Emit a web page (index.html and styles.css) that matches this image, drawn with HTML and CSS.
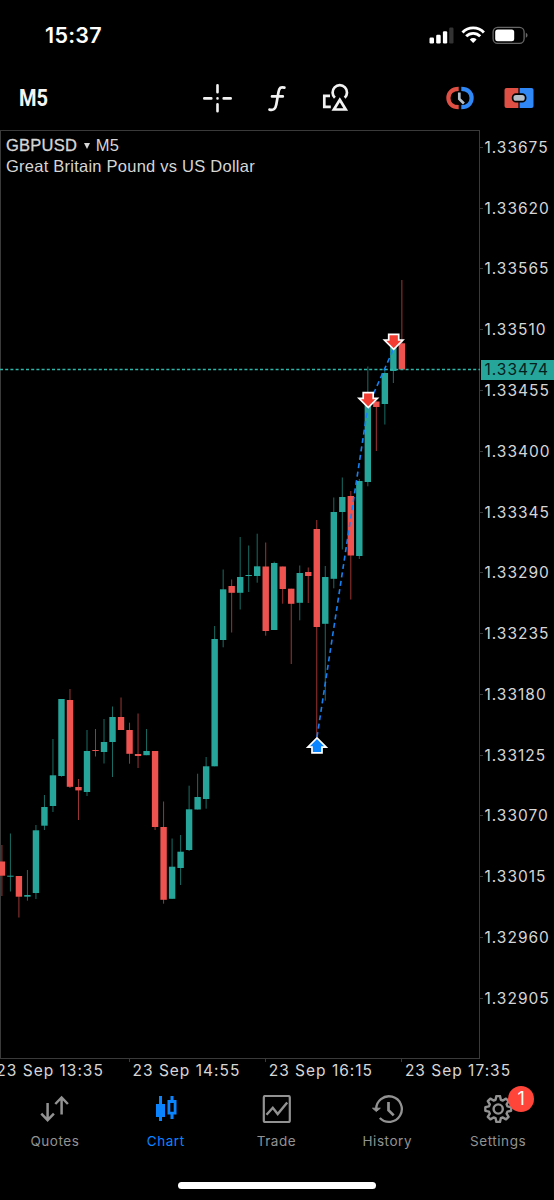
FILE: index.html
```
<!DOCTYPE html>
<html lang="en">
  <head>
    <meta charset="utf-8">
    <title>GBPUSD M5</title>
    <meta name="viewport" content="width=device-width, initial-scale=1">
    <link rel="stylesheet" href="styles.css">
  </head>
  <body>
    <header class="status-bar">
      <span class="clock">15:37</span>
      <svg class="status-icons" width="100" height="20" viewBox="0 0 100 20">
        <g fill="#fff">
          <rect x="0.5" y="11.5" width="4.5" height="6" rx="1.2"/>
          <rect x="7.2" y="8.7" width="4.5" height="8.8" rx="1.2"/>
          <rect x="13.9" y="5.2" width="4.3" height="12.3" rx="1.2"/>
          <rect x="20.2" y="1.6" width="4.3" height="15.9" rx="1.2" fill="#333"/>
        </g>
        <g fill="none" stroke="#fff" stroke-width="2.9">
          <path d="M33.5 6.4a15 15 0 0 1 21.4 0"/>
          <path d="M37.2 10.3a9.8 9.8 0 0 1 14 0"/>
        </g>
        <path d="M40.8 13.4a4.8 4.8 0 0 1 6.8 0l-3.4 3.7z" fill="#fff"/>
        <rect x="64.1" y="1.3" width="31" height="16" rx="4.6" fill="none" stroke="#666" stroke-width="1.3"/>
        <rect x="66.2" y="3.4" width="19" height="11.8" rx="2.5" fill="#fff"/>
        <path d="M96.8 6.8c2.3.9 2.3 4.2 0 5z" fill="#666"/>
      </svg>
    </header>

    <nav class="toolbar">
      <svg class="timeframe" width="40" height="30" viewBox="0 0 40 30">
        <text x="0" y="23" textLength="29" lengthAdjust="spacingAndGlyphs">M5</text>
      </svg>
      <div class="tools">
        <svg width="30" height="30" viewBox="0 0 30 30" fill="none" stroke="#f2f2f2" stroke-width="2.6" stroke-linecap="round">
          <path d="M15.5 2.3v7M15.5 21.3v7M2.3 15.4h7M21.7 15.4h7M15.5 15.4h.01"/>
        </svg>
        <svg width="30" height="30" viewBox="0 0 30 30" fill="none" stroke="#f2f2f2" stroke-width="2.7" stroke-linecap="round" stroke-linejoin="round">
          <path d="M23.4 4.6C19.6 3.6 18.2 5 17.5 9l-2.2 12.500c-.8 4.300-2.600 6.200-6.800 5.100M11 13.400h10.800"/>
        </svg>
        <svg width="30" height="30" viewBox="0 0 30 30" fill="none" stroke="#f2f2f2" stroke-width="2.7">
          <path d="M14.900 14.700a7.200 7.200 0 1 1 9.800 0"/>
          <path d="M19.800 16.800l5.900 9.700H13.900z"/>
          <path d="M10 12.900H4.300v10.900h6.500"/>
        </svg>
      </div>
      <div class="trade-tools">
        <svg width="30" height="26" viewBox="0 0 30 26">
          <g fill="none" stroke-width="4.2">
            <path d="M13.700 3.800C6.900 3.800 3.400 8 3.400 13s3.500 9.200 10.300 9.200" stroke="#df4f43"/>
            <path d="M16.300 3.800c6.800 0 10.300 4.200 10.300 9.200s-3.500 9.200-10.300 9.200" stroke="#2f88f5"/>
          </g>
          <path d="M14.300 7.500V14l4.600 4.500" fill="none" stroke="#b4bec8" stroke-width="2.700"/>
        </svg>
        <svg width="30" height="26" viewBox="0 0 30 26">
          <path d="M14.400 3H2.500A2 2 0 0 0 .5 5v16a2 2 0 0 0 2 2h11.900z" fill="#df4f43"/>
          <path d="M15.600 3h11.900a2 2 0 0 1 2 2v16a2 2 0 0 1-2 2H15.600z" fill="#2f88f5"/>
          <rect x="8.600" y="9.100" width="13" height="7.600" rx="3.400" fill="#b4bec8" stroke="#000" stroke-width="1.700"/>
        </svg>
      </div>
    </nav>

    <main class="chart">
      <section class="plot">
        <div class="symbol">
          <p><b>GBPUSD</b> <i></i> <span>M5</span></p>
          <p>Great Britain Pound vs US Dollar</p>
        </div>
        <svg class="candles" id="candles" width="480" height="929" viewBox="0 130 480 929"></svg>
      </section>
      <aside class="price-axis">
        <span>1.33675</span>
        <span>1.33620</span>
        <span>1.33565</span>
        <span>1.33510</span>
        <span>1.33455</span>
        <span>1.33400</span>
        <span>1.33345</span>
        <span>1.33290</span>
        <span>1.33235</span>
        <span>1.33180</span>
        <span>1.33125</span>
        <span>1.33070</span>
        <span>1.33015</span>
        <span>1.32960</span>
        <span>1.32905</span>
        <strong class="last-price">1.33474</strong>
      </aside>
      <footer class="time-axis">
        <span>23 Sep 13:35</span>
        <span>23 Sep 14:55</span>
        <span>23 Sep 16:15</span>
        <span>23 Sep 17:35</span>
      </footer>
    </main>

    <nav class="tabs">
      <a class="tab">
        <svg width="32" height="32" viewBox="0 0 32 32" fill="none" stroke="currentColor" stroke-width="2.5">
          <path d="M8.600 8v16.500M2.300 18.700l6.300 6.500 6.300-6.500M22.600 19.500V3M16.300 9l6.300-6.500L28.900 9"/>
        </svg>
        <span>Quotes</span>
      </a>
      <a class="tab active">
        <svg width="32" height="32" viewBox="0 0 32 32" fill="currentColor">
          <path d="M9 1h3v8h3v13h-3v4H9v-4H6V9h3z"/>
          <path d="M20.500 1h3v4h3v14.500h-3V24h-3v-4.500h-3V5h3zM20.300 8v8.800h3.400V8z" fill-rule="evenodd"/>
        </svg>
        <span>Chart</span>
      </a>
      <a class="tab">
        <svg width="32" height="32" viewBox="0 0 32 32" fill="none" stroke="currentColor" stroke-width="2.200">
          <rect x="2.800" y="1" width="26" height="26" rx="1.500"/>
          <path d="M5.500 19.800l6.300-7 4.900 6.200 9.500-11.500" stroke-width="2.400"/>
        </svg>
        <span>Trade</span>
      </a>
      <a class="tab">
        <svg width="32" height="32" viewBox="0 0 32 32" fill="none" stroke="currentColor" stroke-width="2.300">
          <path d="M4.200 14.500a12.800 12.800 0 1 1 3.600 8.500"/>
          <path d="M.5 13.200h7.800L4.300 16.500z" fill="currentColor" stroke-width="1"/>
          <path d="M16.500 7v8.200l5.200 5.200" stroke-width="2.700"/>
        </svg>
        <span>History</span>
      </a>
      <a class="tab">
        <svg width="32" height="32" viewBox="0 0 32 32" fill="none" stroke="currentColor" stroke-width="2.400" stroke-linejoin="round">
          <path id="gear"/>
          <circle cx="15.200" cy="14" r="4.600"/>
        </svg>
        <span>Settings</span>
        <em class="badge">1</em>
      </a>
    </nav>
    <div class="home-indicator"></div>

    <script>

const UP = "#26a69a";
const DOWN = "#ef5350";
const STEP = 8.51;

// [direction, high, body top, body bottom, low]
const candles = [
  [-1, 845, 861.5, 875.7, 896],
  [1, 833.5, 875.7, 876.7, 891.5],
  [-1, 876, 876, 896.7, 917.5],
  [1, 870, 895, 896.7, 900.7],
  [1, 825, 830.3, 893, 899],
  [1, 795, 807, 825.7, 830],
  [1, 739, 775.3, 806, 812],
  [1, 699, 699, 776, 776.7],
  [-1, 689, 700, 786.8, 788],
  [-1, 779, 787, 790.4, 820],
  [1, 730, 751, 792, 796],
  [-1, 729, 750, 751, 756.5],
  [1, 719, 742, 752, 763.5],
  [1, 706.5, 717, 742, 777],
  [-1, 697.5, 717, 730, 730],
  [-1, 722.7, 730, 753.8, 763.7],
  [-1, 713.5, 754, 756, 768],
  [1, 729, 751, 755.2, 755.2],
  [-1, 751, 751, 827, 830],
  [-1, 801.5, 827, 899.8, 903.7],
  [1, 838.5, 866.7, 898.8, 898.8],
  [1, 835, 851.7, 868, 885],
  [1, 785.7, 809.3, 850, 851],
  [1, 773.7, 797, 809.5, 809.5],
  [1, 757, 766.3, 799, 808.7],
  [1, 626, 639, 766.3, 766.3],
  [1, 569.5, 589.3, 640, 647.3],
  [-1, 579.5, 586, 592.8, 632.5],
  [1, 537, 577, 592.8, 609.5],
  [1, 545.5, 575, 576, 592],
  [1, 533.7, 566.3, 576, 582.7],
  [-1, 542.5, 566.5, 631, 635.7],
  [1, 561.7, 563, 630, 630],
  [-1, 566.5, 566.5, 589, 603.7],
  [-1, 588.7, 588.7, 603.8, 664],
  [1, 565.5, 573, 602.8, 620.3],
  [-1, 567.5, 572, 576, 603],
  [-1, 520, 529, 627, 738],
  [1, 566, 577, 623.8, 700.7],
  [1, 497.5, 512, 578.8, 588.3],
  [1, 477.5, 497, 512, 549.5],
  [-1, 491, 496, 555.5, 599.5],
  [1, 479, 481, 556, 559],
  [1, 366.5, 404, 482, 486.3],
  [-1, 401.5, 401.5, 407, 451],
  [1, 370, 373, 404, 424.5],
  [1, 345, 345, 371, 383],
  [-1, 280, 343.3, 369.5, 369.5],
];

let svg = "";
candles.forEach(([dir, high, top, bottom, low], i) => {
  const x = 1.9 + i * STEP;
  const color = dir > 0 ? UP : DOWN;
  svg += `<path d="M${x} ${high}V${low}" stroke="${color}" stroke-opacity="0.65"/>`;
  svg += `<rect x="${x - 3.2}" y="${top}" width="6.4" height="${bottom - top}" fill="${color}"/>`;
});

// Last price level.
svg += `<path d="M0 369.5H480" stroke="#2cb5a8" stroke-width="1.5" stroke-dasharray="3 2.2"/>`;

// Closed deals: the buy below, both sells above.
svg += `<path d="M317 737L368 406M317 737L368 406L393.5 349" fill="none" stroke="#1482f5" stroke-width="1.6" stroke-dasharray="5 3.5"/>`;
const arrow = "M-5-7.6H5V-2H9.2L0 7.3L-9.2-2H-5Z";
svg += `<path d="${arrow}" transform="translate(393.7 342)" fill="#f23c32" stroke="#fff" stroke-width="1.7"/>`;
svg += `<path d="${arrow}" transform="translate(368.2 400.3)" fill="#f23c32" stroke="#fff" stroke-width="1.7"/>`;
svg += `<path d="${arrow}" transform="translate(317 745.2) scale(1 -1)" fill="#0a84ff" stroke="#fff" stroke-width="1.7"/>`;
document.getElementById("candles").innerHTML = svg;

// Gear outline with eight teeth.
const points = [];
for (let i = 0; i < 8; i += 1) {
  [[-16, 9.6], [-8, 13], [8, 13], [16, 9.6]].forEach(([offset, radius]) => {
    const angle = (i * 45 + offset) * Math.PI / 180;
    points.push((15.2 + radius * Math.sin(angle)).toFixed(2) + " " + (14 - radius * Math.cos(angle)).toFixed(2));
  });
}
document.getElementById("gear").setAttribute("d", "M" + points.join("L") + "Z");

    </script>
  </body>
</html>
```
FILE: styles.css
```
* {
  box-sizing: border-box;
}
body {
  display: flex;
  flex-direction: column;
  width: 554px;
  height: 1200px;
  margin: 0;
  overflow: hidden;
  background: #000;
  color: #d6d6d6;
  font-family: Inter, "Liberation Sans", sans-serif;
}
p {
  margin: 0;
}
svg {
  display: block;
  flex-shrink: 0;
}
.status-bar {
  display: flex;
  justify-content: space-between;
  align-items: flex-start;
  height: 70px;
  padding: 22px 25px 0 45px;
}
.clock {
  color: #fff;
  font-size: 21.5px;
  font-weight: 600;
  line-height: 26px;
  letter-spacing: 0.3px;
}
.status-icons {
  margin-top: 4px;
}
.toolbar {
  display: flex;
  align-items: center;
  height: 60px;
  padding: 0 20px 4px 19px;
}
.timeframe text {
  fill: #f4f4f4;
  font-family: Roboto, sans-serif;
  font-size: 24px;
  font-weight: 700;
}
.tools {
  display: flex;
  gap: 29px;
  margin-left: 143px;
}
.trade-tools {
  display: flex;
  gap: 29px;
  margin-left: auto;
}
.chart {
  display: grid;
  grid-template-columns: 480px 74px;
  grid-template-rows: 929px 27px;
}
.plot {
  display: grid;
  border: 1px solid #3a3a3a;
}
.plot > * {
  grid-area: 1 / 1;
}
.candles {
  margin: -1px;
}
.symbol {
  padding: 4px 5px;
  font-family: "Liberation Sans", Arial, sans-serif;
  font-size: 16.5px;
  line-height: 21px;
  letter-spacing: 0.24px;
}
.symbol b {
  font-weight: 400;
  -webkit-text-stroke: 0.3px;
}
.symbol i {
  display: inline-block;
  margin: 0 1px 2px 2px;
  border: 3px solid transparent;
  border-top: 6px solid #d6d6d6;
  border-bottom: 0;
}
.price-axis {
  position: relative;
  display: flex;
  flex-direction: column;
  margin-top: -13px;
  font-size: 15.5px;
  letter-spacing: 1px;
}
.price-axis span {
  display: flex;
  align-items: center;
  flex: 0 0 60.79px;
}
.price-axis span::before {
  content: "";
  width: 3px;
  height: 1px;
  margin-right: 1.5px;
  background: #3a3a3a;
}
.last-price {
  position: absolute;
  top: 243px;
  left: 1px;
  width: 73px;
  height: 20px;
  padding-left: 3.5px;
  background: #26a69a;
  color: #04201d;
  font-weight: 400;
  line-height: 20px;
}
.time-axis {
  grid-column: 1 / 3;
  display: grid;
  grid-template-columns: repeat(4, 136.2px);
  margin-left: -7.2px;
  font-size: 15.5px;
  line-height: 23px;
  letter-spacing: 1px;
  white-space: nowrap;
}
.time-axis span {
  padding-left: 3.5px;
}
.time-axis span::before {
  content: "";
  display: block;
  width: 1px;
  height: 3px;
  margin: 0 0 -3px -3.5px;
  background: #3a3a3a;
}
.tabs {
  display: grid;
  grid-template-columns: repeat(5, 1fr);
  height: 97px;
  padding-top: 8.5px;
}
.tab {
  position: relative;
  display: flex;
  flex-direction: column;
  align-items: center;
  gap: 6px;
  color: #929292;
  font-size: 13.5px;
  line-height: 17px;
  letter-spacing: 0.55px;
}
.tab span {
  margin-right: 1px;
}
.tab.active {
  color: #0a84ff;
}
.badge {
  position: absolute;
  top: -9px;
  left: 65px;
  width: 26px;
  height: 26px;
  border-radius: 50%;
  background: #ff453a;
  color: #fff;
  font-size: 18px;
  font-style: normal;
  line-height: 26px;
  letter-spacing: 0;
  text-align: center;
}
.home-indicator {
  width: 198px;
  height: 7px;
  margin: -1px auto 0;
  border-radius: 4px;
  background: #fff;
}
```
